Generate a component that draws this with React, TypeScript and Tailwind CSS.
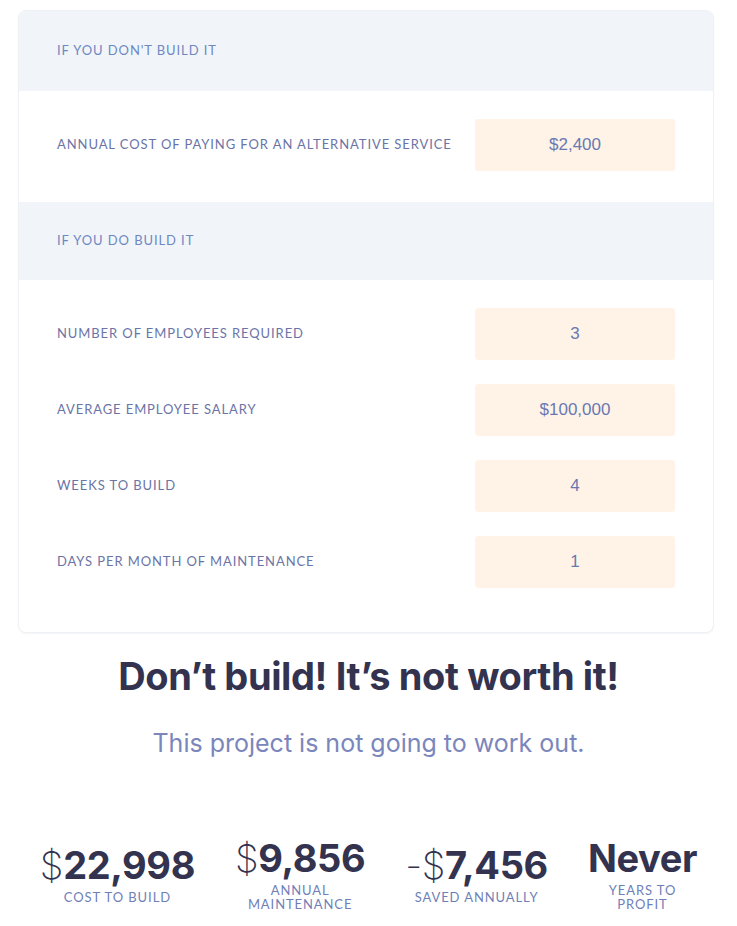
import React from 'react';

const label = "font-['Lato',sans-serif] text-[13px] tracking-[0.07em] uppercase";

const Field = ({ title, value }: { title: string; value: string }) => (
  <div className="flex items-center justify-between pl-[38px] pr-[38px]">
    <span className={`${label} text-[#6b74a6]`}>{title}</span>
    <div className="w-[200px] h-[52px] rounded-[3px] bg-[#fff3e8] flex items-center justify-center font-['Liberation_Sans',Arial,sans-serif] text-[17px] text-[#6a78b2]">
      {value}
    </div>
  </div>
);

const Header = ({ children, h }: { children: React.ReactNode; h: string }) => (
  <div className={`${h} bg-[#f1f5fa] flex items-center pl-[38px]`}>
    <span className={`${label} text-[#6f88c2]`}>{children}</span>
  </div>
);

const stats = [
  { pre: '$', num: '22,998', label: 'Cost to build' },
  { pre: '$', num: '9,856', label: 'Annual maintenance' },
  { pre: '-$', num: '7,456', label: 'Saved annually' },
  { pre: '', num: 'Never', label: 'Years to profit' },
];

export default function App() {
  return (
    <div className="w-[737px] h-[926px] bg-white pt-[10px] overflow-hidden">
      {/* Calculator card */}
      <div className="ml-[18px] w-[696px] rounded-[8px] border border-[#edf0f5] shadow-[0_1px_2px_rgba(0,0,0,0.04)] overflow-hidden bg-white">
        <Header h="h-[80px]">If you don't build it</Header>
        <div className="pt-[28px] pb-[31px]">
          <Field title="Annual cost of paying for an alternative service" value="$2,400" />
        </div>
        <Header h="h-[78px]">If you do build it</Header>
        <div className="pt-[28px] pb-[44px] flex flex-col gap-[24px]">
          <Field title="Number of employees required" value="3" />
          <Field title="Average employee salary" value="$100,000" />
          <Field title="Weeks to build" value="4" />
          <Field title="Days per month of maintenance" value="1" />
        </div>
      </div>

      {/* Verdict */}
      <h1 className="mt-[21px] text-center font-['Inter',sans-serif] font-bold text-[38px] leading-[44px] tracking-[-0.01em] text-[#33334f]">
        Don’t build! It’s not worth it!
      </h1>
      <p className="mt-[30px] text-center font-['Inter',sans-serif] text-[25px] leading-[30px] text-[#7a86bc]">
        This project is not going to work out.
      </p>

      {/* Stats */}
      <div className="mt-[78px] flex justify-center items-center gap-[40px]">
        {stats.map((s) => (
          <div key={s.label} className="flex flex-col items-center">
            <div className="font-['Inter',sans-serif] text-[38px] leading-[44px] text-[#33334f] whitespace-nowrap tracking-[-0.01em]">
              <span className="font-extralight">{s.pre}</span>
              <span className="font-bold">{s.num}</span>
            </div>
            <div className={`${label} w-0 min-w-full text-center leading-[14px] text-[#6f7fb8] mt-[3px]`}>
              {s.label}
            </div>
          </div>
        ))}
      </div>
    </div>
  );
}
